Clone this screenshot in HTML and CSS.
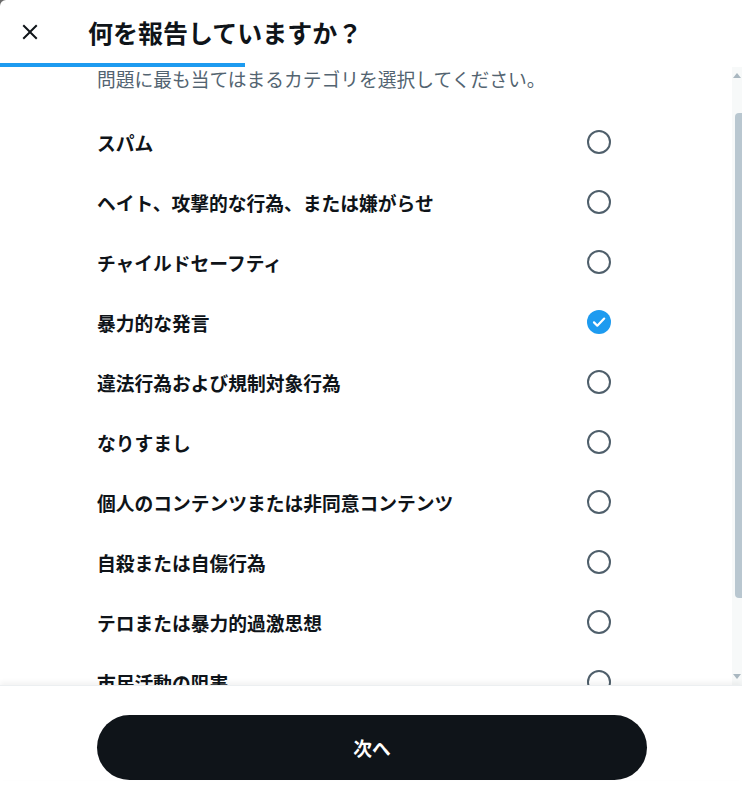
FILE: index.html
```html
<!DOCTYPE html>
<html lang="ja">
<head>
<meta charset="utf-8">
<title>何を報告していますか？</title>
<link rel="stylesheet" href="styles.css">
</head>
<body>
<div class="modal">
  <header class="header">
    <button class="close" aria-label="閉じる">
      <svg viewBox="0 0 24 24" class="close-icon"><path d="M10.59 12L4.54 5.96l1.42-1.42L12 10.59l6.04-6.05 1.42 1.42L13.41 12l6.05 6.04-1.420 1.42L12 13.41l-6.04 6.05-1.42-1.42L10.59 12z"/></svg>
    </button>
    <h1 class="title">何を報告していますか？</h1>
  </header>
  <div class="progress"><div class="progress-fill"></div></div>
  <div class="scroll">
    <div class="content">
      <p class="subtitle">問題に最も当てはまるカテゴリを選択してください。</p>
      <ul class="options">
        <li class="option"><span class="label">スパム</span><span class="radio"></span></li>
        <li class="option"><span class="label">ヘイト、攻撃的な行為、または嫌がらせ</span><span class="radio"></span></li>
        <li class="option"><span class="label">チャイルドセーフティ</span><span class="radio"></span></li>
        <li class="option"><span class="label">暴力的な発言</span><span class="radio checked"><svg viewBox="0 0 24 24" class="check"><path d="M7 12.4l3.3 3.3L17.2 8.6" /></svg></span></li>
        <li class="option"><span class="label">違法行為および規制対象行為</span><span class="radio"></span></li>
        <li class="option"><span class="label">なりすまし</span><span class="radio"></span></li>
        <li class="option"><span class="label">個人のコンテンツまたは非同意コンテンツ</span><span class="radio"></span></li>
        <li class="option"><span class="label">自殺または自傷行為</span><span class="radio"></span></li>
        <li class="option"><span class="label">テロまたは暴力的過激思想</span><span class="radio"></span></li>
        <li class="option"><span class="label">市民活動の阻害</span><span class="radio"></span></li>
      </ul>
    </div>
    <div class="scrollbar" aria-hidden="true">
      <span class="arrow arrow-up"></span>
      <span class="thumb"></span>
      <span class="arrow arrow-down"></span>
    </div>
  </div>
  <footer class="footer">
    <button class="next">次へ</button>
  </footer>
</div>
</body>
</html>
```

FILE: styles.css
```css
html {
  background: #6b6b6b;
}
body {
  margin: 0;
  font-family: "Noto Sans CJK JP", "Noto Sans", sans-serif;
  color: #0f1419;
}
.modal {
  height: 801px;
  background: #ffffff;
  border-top-left-radius: 6px;
  display: flex;
  flex-direction: column;
  overflow: hidden;
}
.header {
  height: 63px;
  display: flex;
  align-items: center;
  padding-left: 18px;
  flex: none;
}
.close {
  border: 0;
  background: none;
  padding: 0;
  width: 24px;
  height: 24px;
  display: flex;
  margin-top: 1px;
}
.close-icon {
  width: 24px;
  height: 24px;
  fill: #0f1419;
}
.title {
  margin: 0 0 0 46px;
  font-size: 25px;
  font-weight: 700;
  line-height: 30px;
  color: #0f1419;
}
.progress {
  height: 4px;
  flex: none;
}
.progress-fill {
  width: 245px;
  height: 4px;
  background: #1d9bf0;
}
.scroll {
  position: relative;
  height: 618px;
  flex: none;
  overflow: hidden;
}
.content {
  padding-right: 10px;
}
.subtitle {
  margin: 0;
  padding: 1px 0 23px 97px;
  font-size: 18.75px;
  line-height: 22px;
  color: #536471;
  font-weight: 400;
}
.options {
  list-style: none;
  margin: 0;
  padding: 0;
}
.option {
  height: 60px;
  display: flex;
  align-items: center;
  justify-content: space-between;
  padding-left: 97px;
  padding-right: 121px;
}
.label {
  font-size: 18.75px;
  font-weight: 700;
  line-height: 24px;
  color: #0f1419;
}
.radio {
  width: 24px;
  height: 24px;
  box-sizing: border-box;
  border: 2.4px solid #4f5f6b;
  border-radius: 50%;
  display: flex;
  align-items: center;
  justify-content: center;
  margin-top: -2px;
}
.radio.checked {
  border: 0;
  background: #1d9bf0;
}
.check {
  width: 24px;
  height: 24px;
  fill: none;
  stroke: #ffffff;
  stroke-width: 2.2;
  stroke-linecap: round;
  stroke-linejoin: round;
}
.scrollbar {
  position: absolute;
  top: 0;
  right: 0;
  width: 10px;
  height: 618px;
  background: #f7f9f9;
}
.arrow {
  position: absolute;
  left: 1px;
  width: 0;
  height: 0;
  border-left: 4px solid transparent;
  border-right: 4px solid transparent;
}
.arrow-up {
  top: 6px;
  border-bottom: 5px solid #a9b7c0;
}
.arrow-down {
  bottom: 6px;
  border-top: 5px solid #a9b7c0;
}
.thumb {
  position: absolute;
  top: 46px;
  left: 3px;
  width: 7px;
  height: 485px;
  background: #b9c7d0;
  border-radius: 4px 0 0 4px;
}
.footer {
  flex: none;
  position: relative;
  border-top: 1px solid #eceff1;
  box-shadow: 0 -3px 5px rgba(0, 0, 0, 0.05);
  padding: 29px 0 0 97px;
  background: #ffffff;
}
.next {
  width: 550px;
  height: 65px;
  border: 0;
  border-radius: 9999px;
  background: #0f1419;
  color: #ffffff;
  font-family: "Noto Sans CJK JP", "Noto Sans", sans-serif;
  font-size: 18.75px;
  font-weight: 700;
  padding: 0;
}
```
